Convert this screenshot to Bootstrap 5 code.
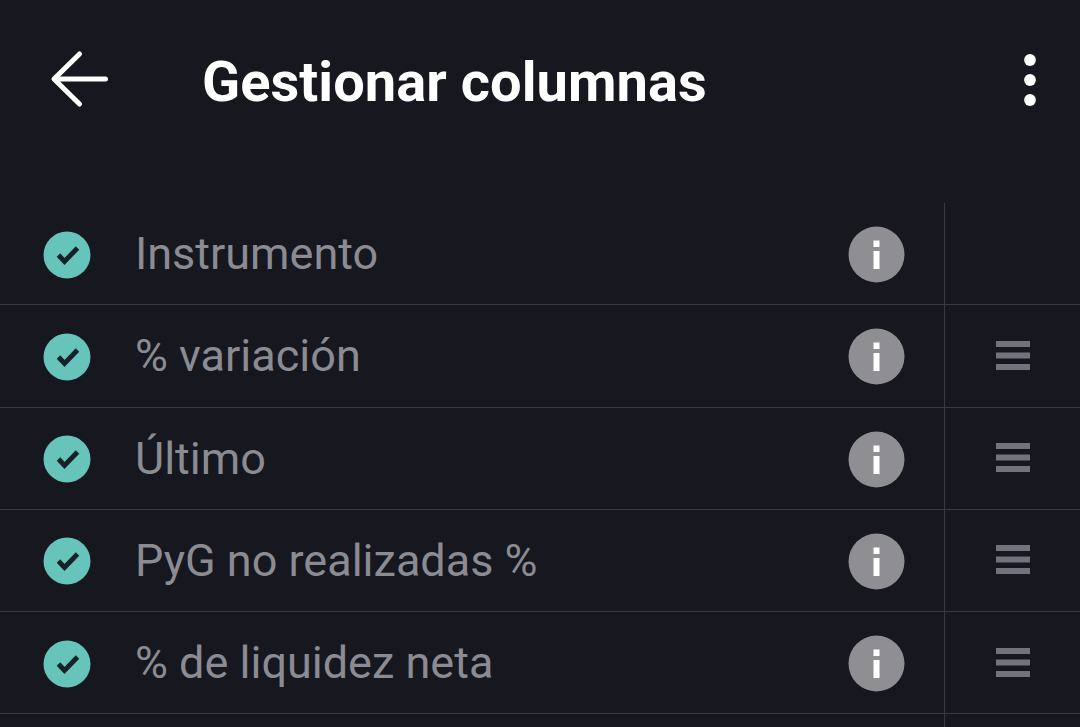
<!DOCTYPE html>
<html lang="es">
<head>
  <meta charset="UTF-8">
  <title>Gestionar columnas</title>
  <link rel="stylesheet" href="https://cdn.jsdelivr.net/npm/bootstrap@5.3.0/dist/css/bootstrap.min.css">
  <style>
    body { background: #16171f; font-family: Roboto, "Liberation Sans", sans-serif; height: 100vh; }
    .top-bar { height: 203px; padding: 0 44px 43px 50px; }
    .top-title { font-size: 56px; font-weight: 700; color: #fff; margin: 4px 0 0 92px; line-height: 1; letter-spacing: .05px; }
    .col-row { height: 102.25px; border-bottom: 1px solid #383941; }
    .col-main { padding: 2px 39px 0 43px; gap: 44px; }
    .col-name { font-size: 45px; color: #8b8b93; line-height: 1; margin-top: -2px; }
    .col-side { width: 136px; border-left: 1px solid #383941; }
  </style>
</head>
<body class="d-flex flex-column">
<div class="top-bar d-flex align-items-center">
  <svg width="60" height="60" viewBox="0 0 60 60" fill="none" stroke="#fff" stroke-width="5" stroke-linecap="round" stroke-linejoin="round">
    <path d="M55.500 29H5M29.500 4 4 29 29.500 54"/>
  </svg>
  <h1 class="top-title flex-grow-1">Gestionar columnas</h1>
  <svg width="12" height="52" viewBox="0 0 12 52" fill="#fff">
    <circle cx="6" cy="6" r="5.900"/><circle cx="6" cy="26" r="5.900"/><circle cx="6" cy="46" r="5.900"/>
  </svg>
</div>

<div id="rows"></div>
<div class="d-flex flex-grow-1 justify-content-end">
  <div class="col-side"></div>
</div>

<script>
const names = ["Instrumento", "% variación", "Último", "PyG no realizadas %", "% de liquidez neta"];
const check = `<svg width="48" height="48" viewBox="0 0 48 48" class="flex-shrink-0"><circle cx="24" cy="24" r="23.500" fill="#66c4ba"/><path d="M15.500 24 21.500 30.500 34.500 17" fill="none" stroke="#16212a" stroke-width="4.800"/></svg>`;
const info = `<svg width="57" height="57" viewBox="0 0 57 57" class="flex-shrink-0"><circle cx="28.500" cy="28.500" r="28" fill="#8e8e93"/><path d="M25.500 14.500h6v6.500h-6zM25.500 25h6v18h-6z" fill="#fff"/></svg>`;
const bars = `<svg width="34" height="30" viewBox="0 0 34 30" fill="#73737d"><rect width="34" height="6"/><rect y="11.500" width="34" height="6"/><rect y="23" width="34" height="6"/></svg>`;
document.getElementById("rows").innerHTML = names.map((n, i) => `
  <div class="col-row d-flex">
    <div class="col-main d-flex flex-grow-1 align-items-center">
      ${check}
      <span class="col-name flex-grow-1">${n}</span>
      ${info}
    </div>
    <div class="col-side d-flex align-items-center justify-content-center">${i ? bars : ""}</div>
  </div>`).join("");
</script>
<script src="https://cdn.jsdelivr.net/npm/bootstrap@5.3.0/dist/js/bootstrap.bundle.min.js"></script>
</body>
</html>
